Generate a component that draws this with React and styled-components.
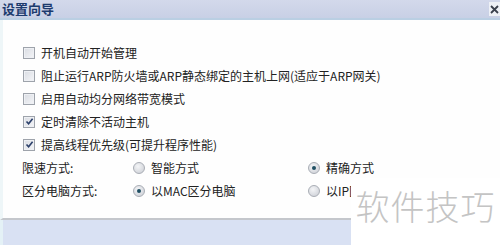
import { createGlobalStyle, styled } from "styled-components";

const Global = createGlobalStyle`
  html, body { margin: 0; padding: 0; background: #fff; }
  body { width: 500px; height: 245px; overflow: hidden; }
`;

const Window = styled.div`
  position: relative;
  width: 500px;
  height: 245px;
  display: flex;
  flex-direction: column;
  background: #d9e1f3;
  font-family: "Noto Sans CJK SC", "Liberation Sans", sans-serif;
  font-size: 12px;
  color: #222;
  overflow: hidden;
`;

const TitleBar = styled.div`
  height: 20px;
  flex: none;
  display: flex;
  align-items: center;
  justify-content: space-between;
  box-sizing: border-box;
  background: linear-gradient(#d3d9eb, #c8d0e5);
  border-bottom: 2px solid #bacfe3;
`;

const Title = styled.span`
  padding-left: 2px;
  font-size: 13px;
  line-height: 16px;
  font-weight: bold;
  color: #1d3b6e;
`;

const Close = styled.span`
  width: 11px;
  height: 14px;
  display: flex;
  align-items: center;
  justify-content: center;
  background: #eef1f6;
`;

const Body = styled.div`
  height: 200px;
  flex: none;
  display: flex;
  flex-direction: column;
  padding: 21px 0 0 23px;
  background: #fefefe;
  border-left: 3px solid #eef6f8;
  border-bottom: 2px solid #c4c7cc;
  box-sizing: border-box;
`;

const Row = styled.div`
  height: 23px;
  flex: none;
  display: flex;
  align-items: center;
`;

const Box = styled.span`
  width: 10px;
  height: 10px;
  flex: none;
  margin: 0 6px 0 -3px;
  border: 1px solid #9ea3ab;
  background: linear-gradient(135deg, #d9dce2, #f4f5f8);
  box-shadow: inset 0 0 0 1px #eef0f4;
  display: flex;
  align-items: center;
  justify-content: center;
`;

const Label = styled.span`
  width: ${(p) => p.$w}px;
  flex: none;
  margin-left: -4px;
`;

const Option = styled.span`
  width: ${(p) => p.$w}px;
  flex: none;
  display: flex;
  align-items: center;
  overflow: hidden;
  white-space: nowrap;
`;

const Dot = styled.span`
  width: 10px;
  height: 10px;
  flex: none;
  margin-right: 6px;
  border-radius: 50%;
  border: 1px solid #a9adb5;
  background: radial-gradient(circle at 40% 35%, #f4f5f7, #c9ccd3);
  display: flex;
  align-items: center;
  justify-content: center;
  &::after {
    content: "";
    width: 4px;
    height: 4px;
    border-radius: 50%;
    background: ${(p) => (p.$on ? "#1f4f63" : "transparent")};
  }
`;

const Footer = styled.div`
  flex: 1;
  background: #d9e1f3;
  border-left: 3px solid #e4f1f6;
`;

const Stamp = styled.div`
  position: absolute;
  left: 351px;
  top: 178px;
  width: 149px;
  height: 67px;
  background: #fff;
  box-sizing: border-box;
  display: flex;
  align-items: flex-start;
  justify-content: center;
  padding-top: 8px;
  font-size: 34px;
  line-height: 40px;
  font-weight: 300;
  letter-spacing: 1px;
  color: #c4c4c4;
`;

function Check({ on }) {
  return (
    <Box>
      {on && (
        <svg width="9" height="9" viewBox="0 0 9 9">
          <path d="M1.5 4.5 L3.6 6.8 L7.6 1.8" fill="none" stroke="#2b3f6a" strokeWidth="1.6" />
        </svg>
      )}
    </Box>
  );
}

const checks = [
  ["开机自动开始管理", false],
  ["阻止运行ARP防火墙或ARP静态绑定的主机上网(适应于ARP网关)", false],
  ["启用自动均分网络带宽模式", false],
  ["定时清除不活动主机", true],
  ["提高线程优先级(可提升程序性能)", true],
];

export default function App() {
  return (
    <Window>
      <Global />
      <TitleBar>
        <Title>设置向导</Title>
        <Close>
          <svg width="9" height="9" viewBox="0 0 9 9">
            <path d="M1 1 L8 8 M8 1 L1 8" stroke="#3a404c" strokeWidth="1.8" />
          </svg>
        </Close>
      </TitleBar>
      <Body>
        {checks.map(([t, on]) => (
          <Row key={t}>
            <Check on={on} />
            {t}
          </Row>
        ))}
        <Row>
          <Label $w={111}>限速方式:</Label>
          <Option $w={175}>
            <Dot />
            智能方式
          </Option>
          <Option $w={80}>
            <Dot $on />
            精确方式
          </Option>
        </Row>
        <Row>
          <Label $w={111}>区分电脑方式:</Label>
          <Option $w={175}>
            <Dot $on />
            以MAC区分电脑
          </Option>
          <Option $w={45}>
            <Dot />
            以IP区分电脑
          </Option>
        </Row>
      </Body>
      <Footer />
      <Stamp>软件技巧</Stamp>
    </Window>
  );
}
